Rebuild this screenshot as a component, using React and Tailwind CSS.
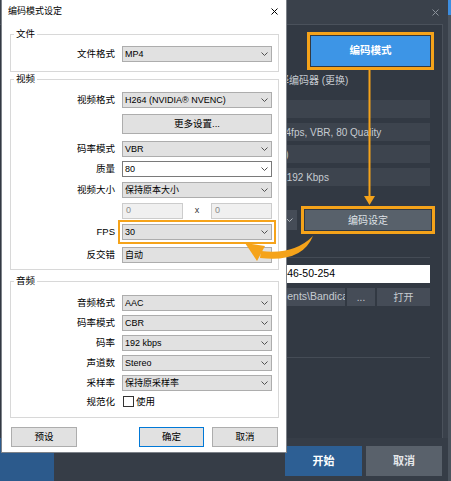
import React from "react";

const ORANGE = "#f5a31a";

function XIcon({ color = "#000", size = 7 }) {
  return (
    <svg width={size} height={size} viewBox={`0 0 ${size} ${size}`} fill="none">
      <path d={`M0.5 0.5L${size - 0.5} ${size - 0.5}M${size - 0.5} 0.5L0.5 ${size - 0.5}`} stroke={color} strokeWidth="1" />
    </svg>
  );
}

function Chevron({ color = "#505050" }) {
  return (
    <svg width="7" height="4" viewBox="0 0 7 4" fill="none">
      <path d="M0.5 0.5L3.5 3.5L6.5 0.5" stroke={color} strokeWidth="1" />
    </svg>
  );
}

function Select({ value, white }) {
  return (
    <div
      className={
        white
          ? "flex h-[16px] w-[150px] items-center justify-between border border-[#7a7a7a] bg-white pl-[2px] pr-[3px]"
          : "flex h-[16px] w-[150px] items-center justify-between border border-[#adadad] bg-[#e1e1e1] pl-[2px] pr-[3px]"
      }
    >
      <span className="text-[9px] leading-none text-black">{value}</span>
      <Chevron />
    </div>
  );
}

function Row({ label, children, className = "" }) {
  return (
    <div className={`flex items-center ${className}`}>
      <div className="w-[104px] text-right text-[9.5px] leading-none text-black">{label}</div>
      <div className="ml-[7px]">{children}</div>
    </div>
  );
}

function Legend({ children }) {
  return <legend className="ml-[3px] px-[2px] text-[9.5px] leading-[12px] text-black">{children}</legend>;
}

function Btn({ children, className = "" }) {
  return (
    <div className={`flex h-[20px] items-center justify-center border bg-[#e1e1e1] text-[9.5px] text-black ${className}`}>
      {children}
    </div>
  );
}

function Dialog() {
  return (
    <div className="absolute left-[1px] top-0 flex h-[453px] w-[286px] flex-col border-x border-b border-[#7d8289] bg-white">
      <div className="flex h-[22px] shrink-0 items-center justify-between pl-[6px] pr-[8px]">
        <span className="text-[9px] leading-none text-black">编码模式设定</span>
        <XIcon />
      </div>
      <div className="flex flex-col pl-[8px] pr-[7px]">
        <fieldset className="mt-[6px] border border-[#d8d8d8] pb-[9px]">
          <Legend>文件</Legend>
          <Row label="文件格式" className="mt-[6px]">
            <Select value="MP4" />
          </Row>
        </fieldset>

        <fieldset className="mt-[1px] border border-[#d8d8d8] pb-[6px]">
          <Legend>视频</Legend>
          <Row label="视频格式" className="mt-[7px]">
            <Select value="H264 (NVIDIA® NVENC)" />
          </Row>
          <Row label="" className="mt-[6px]">
            <Btn className="w-[150px] border-[#adadad]">更多设置...</Btn>
          </Row>
          <Row label="码率模式" className="mt-[7px]">
            <Select value="VBR" />
          </Row>
          <Row label="质量" className="mt-[4px]">
            <Select value="80" white />
          </Row>
          <Row label="视频大小" className="mt-[5px]">
            <Select value="保持原本大小" />
          </Row>
          <Row label="" className="mt-[5px]">
            <div className="flex w-[150px] items-center justify-between">
              <div className="flex h-[16px] w-[61px] items-center border border-[#cccccc] bg-[#f0f0f0] pl-[3px] text-[9px] text-[#8a8a8a]">0</div>
              <span className="text-[9px] text-[#333]">x</span>
              <div className="flex h-[16px] w-[61px] items-center border border-[#cccccc] bg-[#f0f0f0] pl-[3px] text-[9px] text-[#8a8a8a]">0</div>
            </div>
          </Row>
          <Row label="FPS" className="mt-[5px]">
            <div className="outline-2 outline-offset-2 outline-[#f5a31a]">
              <Select value="30" />
            </div>
          </Row>
          <Row label="反交错" className="mt-[7px]">
            <Select value="自动" />
          </Row>
        </fieldset>

        <fieldset className="mt-[5px] border border-[#d8d8d8] pb-[10px]">
          <Legend>音频</Legend>
          <Row label="音频格式" className="mt-[8px]">
            <Select value="AAC" />
          </Row>
          <Row label="码率模式" className="mt-[4px]">
            <Select value="CBR" />
          </Row>
          <Row label="码率" className="mt-[4px]">
            <Select value="192 kbps" />
          </Row>
          <Row label="声道数" className="mt-[4px]">
            <Select value="Stereo" />
          </Row>
          <Row label="采样率" className="mt-[4px]">
            <Select value="保持原采样率" />
          </Row>
          <Row label="规范化" className="mt-[5px]">
            <div className="flex items-center">
              <div className="ml-[1px] h-[11px] w-[11px] border border-[#333] bg-white" />
              <span className="ml-[2px] text-[9.5px] leading-none text-black">使用</span>
            </div>
          </Row>
        </fieldset>

        <div className="mt-[9px] flex items-center justify-between px-[1px]">
          <Btn className="w-[66px] border-[#adadad]">预设</Btn>
          <div className="flex gap-[8px]">
            <Btn className="w-[65px] border-[#0078d7]">确定</Btn>
            <Btn className="w-[66px] border-[#adadad]">取消</Btn>
          </div>
        </div>
      </div>
    </div>
  );
}

function AppWindow() {
  return (
    <div className="flex h-full">
      <div className="flex w-[448px] flex-col">
        <div className="flex h-[24px] shrink-0 items-center justify-end pr-[9px]">
          <XIcon color="#8b929b" />
        </div>
        <div className="mr-[5px] flex h-[414px] shrink-0 flex-col border-r border-t border-[#4a515b] bg-[#323943] pl-[240px] pr-[12px] text-[10px] text-[#c6cbd1]">
          <div className="mt-[11px] flex h-[30px] w-[119px] items-center justify-center self-end bg-[#3d95e6] text-[10.5px] font-bold text-white outline-3 outline-offset-1 outline-[#f5a31a]">
            编码模式
          </div>
          <div className="mt-[8px] whitespace-nowrap pl-[29px] leading-[14px]">选择编码器 (更换)</div>
          <div className="mt-[12px] h-[18px] bg-[#3d444e]" />
          <div className="mt-[5px] flex h-[18px] items-center whitespace-nowrap bg-[#3d444e] pl-[40px]">24fps, VBR, 80 Quality</div>
          <div className="mt-[4px] flex h-[18px] items-center whitespace-nowrap bg-[#3d444e] pl-[22px]">(自动)</div>
          <div className="mt-[5px] flex h-[18px] items-center whitespace-nowrap bg-[#3d444e] pl-[25px]">2ch, 192 Kbps</div>
          <div className="mt-[20px] flex h-[28px] shrink-0 items-center">
            <div className="flex h-[20px] w-[57px] shrink-0 items-center justify-end bg-[#454c57] pr-[4px]">
              <Chevron color="#aeb4bb" />
            </div>
            <div className="ml-[8px] flex h-[20px] w-[126px] shrink-0 items-center justify-center bg-[#58616b] text-[10px] text-[#dfe2e6] outline-3 outline-offset-1 outline-[#f5a31a]">
              编码设定
            </div>
          </div>
          <div className="mt-[23px] h-px bg-[#444b55]" />
          <div className="mt-[7px] flex h-[18px] items-center whitespace-nowrap bg-white pl-[32px] text-[10.5px] text-black">13-46-50-254</div>
          <div className="mt-[5px] flex h-[18px] gap-[2px]">
            <div className="flex w-[105px] shrink-0 items-center overflow-hidden whitespace-nowrap bg-[#454c57] pl-[14px] text-[10.5px]">Documents\Bandicam</div>
            <div className="flex w-[28px] shrink-0 items-center justify-center bg-[#454c57] text-[10px]">...</div>
            <div className="flex w-[53px] shrink-0 items-center justify-center bg-[#454c57] text-[10px]">打开</div>
          </div>
          <div className="mt-[51px] h-px bg-[#454c56]" />
        </div>
        <div className="flex flex-1">
          <div className="w-[54px] bg-[#2c5a8c]" />
          <div className="flex flex-1 justify-end gap-[4px] bg-[#363d47] pr-[6px] pt-[8px]">
            <div className="flex h-[30px] w-[77px] items-center justify-center bg-[#2d5f94] text-[11px] font-bold text-white">开始</div>
            <div className="flex h-[30px] w-[76px] items-center justify-center bg-[#59616b] text-[11px] font-bold text-[#e6e8eb]">取消</div>
          </div>
        </div>
      </div>
      <div className="flex w-[3px] flex-col bg-[#4b535d]">
        <div className="h-[15px] bg-[#3c8de0]" />
      </div>
    </div>
  );
}

function Arrows() {
  return (
    <svg className="pointer-events-none absolute left-0 top-0" width="451" height="481" viewBox="0 0 451 481" fill="none">
      <line x1="369.5" y1="70" x2="369.5" y2="198" stroke={ORANGE} strokeWidth="2" />
      <polygon points="364,196 375,196 369.5,205" fill={ORANGE} />
      <path d="M313 236 Q 302 263 260 258 L 261 251 Q 294 255 313 236 Z" fill={ORANGE} />
      <polygon points="245,243 265,246 257,261" fill={ORANGE} />
    </svg>
  );
}

export default function App() {
  return (
    <div className="relative h-[481px] w-[451px] overflow-hidden bg-[#3a414b] font-['Liberation_Sans','Noto_Sans_CJK_SC',sans-serif]">
      <AppWindow />
      <Dialog />
      <Arrows />
    </div>
  );
}
